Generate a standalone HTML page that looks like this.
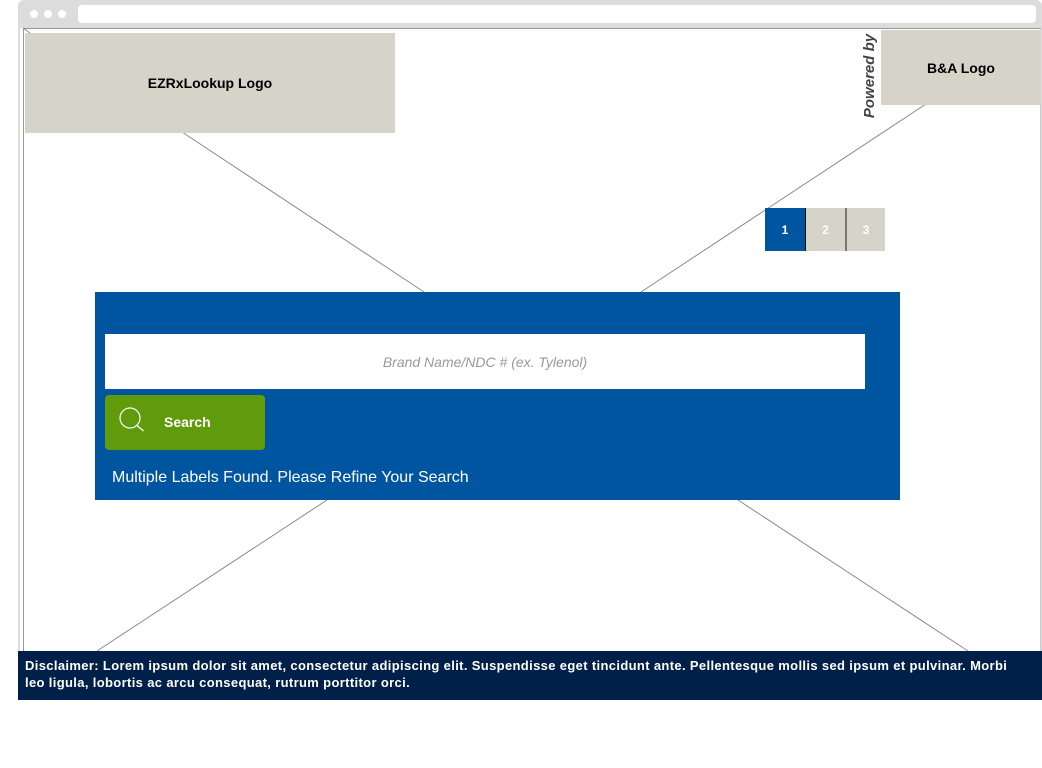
<!DOCTYPE html>
<html><head><meta charset="utf-8"><style>
*{margin:0;padding:0;box-sizing:border-box}
body{width:1042px;height:768px;background:#fff;position:relative;overflow:hidden;font-family:"Liberation Sans",Arial,sans-serif}
.a{position:absolute}
</style></head><body>
<div class="a" style="left:18px;top:0;width:1024px;height:700px;border:2px solid #dcdcdc;border-radius:6px 6px 0 0"></div>
<div class="a" style="left:18px;top:0;width:1024px;height:28px;background:#dcdcdc;border-radius:6px 6px 0 0"></div>
<div class="a" style="left:30px;top:10px;width:8px;height:8px;border-radius:50%;background:#fff"></div>
<div class="a" style="left:44px;top:10px;width:8px;height:8px;border-radius:50%;background:#fff"></div>
<div class="a" style="left:58px;top:10px;width:8px;height:8px;border-radius:50%;background:#fff"></div>
<div class="a" style="left:78px;top:5px;width:958px;height:18px;background:#fff;border-radius:4px"></div>
<div class="a" style="left:23px;top:28px;width:1018px;height:623px;border-left:1px solid #999;border-top:1px solid #999;border-right:1px solid #ccc"></div>
<svg class="a" style="left:0;top:0" width="1042" height="768">
<g stroke="#8a8a8a" stroke-width="1" fill="none">
<line x1="23" y1="28" x2="30" y2="33"/>
<line x1="182" y1="132" x2="424" y2="292"/>
<line x1="926" y1="104" x2="641" y2="292"/>
<line x1="327" y1="500" x2="97" y2="651"/>
<line x1="738" y1="500" x2="968" y2="651"/>
</g></svg>
<div class="a" style="left:25px;top:33px;width:370px;height:100px;background:#d6d3c9;display:flex;align-items:center;justify-content:center;font-weight:bold;font-size:14px;color:#000">EZRxLookup Logo</div>
<div class="a" style="left:881px;top:30px;width:160px;height:75px;background:#d6d3c9;display:flex;align-items:center;justify-content:center;font-weight:bold;font-size:14px;color:#000">B&amp;A Logo</div>
<div class="a" style="left:815px;top:66px;width:110px;height:20px;transform:rotate(-90deg);font-style:italic;font-weight:bold;font-size:15px;color:#444;text-align:center;line-height:20px">Powered by</div>
<div class="a" style="left:765px;top:208px;width:41px;height:43px;background:#0055a0;color:#fff;font-weight:bold;font-size:12px;display:flex;align-items:center;justify-content:center;border-right:1px solid #000">1</div>
<div class="a" style="left:806px;top:208px;width:41px;height:43px;background:#d6d3c9;color:#fff;font-weight:bold;font-size:12px;display:flex;align-items:center;justify-content:center;border-right:2px solid #777">2</div>
<div class="a" style="left:847px;top:208px;width:38px;height:43px;background:#d6d3c9;color:#fff;font-weight:bold;font-size:12px;display:flex;align-items:center;justify-content:center">3</div>
<div class="a" style="left:95px;top:292px;width:805px;height:208px;background:#0055a0"></div>
<div class="a" style="left:105px;top:334px;width:760px;height:55px;background:#fff;color:#999;font-style:italic;font-size:14px;display:flex;align-items:center;justify-content:center">Brand Name/NDC # (ex. Tylenol)</div>
<div class="a" style="left:105px;top:395px;width:160px;height:55px;background:#5f9b0b;border-radius:4px"></div>
<svg class="a" style="left:116px;top:405px" width="34" height="34"><circle cx="14" cy="13" r="10" stroke="#fff" stroke-width="1.2" fill="none"/><line x1="21" y1="20.5" x2="27.5" y2="26" stroke="#fff" stroke-width="1.3"/></svg>
<div class="a" style="left:164px;top:414px;font-weight:bold;font-size:14px;color:#fff">Search</div>
<div class="a" style="left:112px;top:469px;font-size:16px;color:#fff">Multiple Labels Found. Please Refine Your Search</div>
<div class="a" style="left:18px;top:651px;width:1024px;height:49px;background:#00204a;color:#fff;font-weight:bold;font-size:13px;letter-spacing:0.35px;line-height:17px;padding:6px 14px 0 7px">Disclaimer: Lorem ipsum dolor sit amet, consectetur adipiscing elit. Suspendisse eget tincidunt ante. Pellentesque mollis sed ipsum et pulvinar. Morbi leo ligula, lobortis ac arcu consequat, rutrum porttitor orci.</div>
</body></html>
